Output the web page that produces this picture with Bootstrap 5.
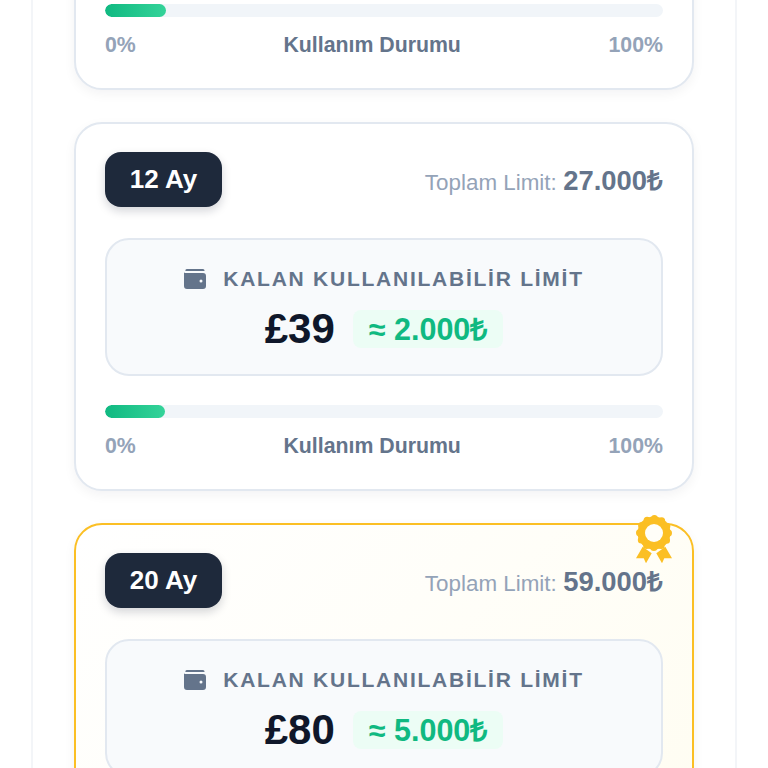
<!DOCTYPE html>
<html lang="en">

<head>
    <meta charset="UTF-8">
    <meta name="viewport" content="width=device-width, initial-scale=1.0">
    <title>Limitler</title>
    <link href="https://cdn.jsdelivr.net/npm/bootstrap@5.3.2/dist/css/bootstrap.min.css" rel="stylesheet">
    <style>
        html, body { height: 768px; overflow: hidden; }
        body { background: #fff; font-family: "Liberation Sans", Arial, sans-serif; }
        .panel-wrap { width: 706px; margin: 0 auto 0 31px; padding: 0 41px; background: #fff; border-left: 2px solid #f3f5f8; border-right: 2px solid #f3f5f8; min-height: 768px; }
        .plan-list { margin-top: -55px; gap: 32px; }
        .plan-card { border: 2px solid #e2e8f0; border-radius: 28px; padding: 28px 29px 29px; box-shadow: 0 4px 12px rgba(15, 23, 42, .05); background: #fff; }
        .plan-card.best { border-color: #fbbf24; background: linear-gradient(135deg, #fff 0%, #fffdf2 100%); }
        .term-pill { width: 117px; height: 55px; border-radius: 16px; background: #1e293b; color: #fff; font-size: 26px; font-weight: 700; box-shadow: 0 4px 10px rgba(15, 23, 42, .18); }
        .limit-block { padding-top: 3px; }
        .limit-label { color: #94a3b8; font-size: 22.4px; }
        .limit-value { color: #64748b; font-size: 27.4px; font-weight: 700; margin-left: 2px; }
        .remain-box { margin-top: 31px; height: 138px; border: 2px solid #e2e8f0; border-radius: 24px; background: #f8fafc; padding-top: 25px; }
        .remain-title { color: #64748b; font-size: 21px; font-weight: 700; letter-spacing: 1.75px; line-height: 28px; gap: 17px; }
        .amount-row { margin-top: 12px; gap: 18px; }
        .amount { color: #0f172a; font-size: 42px; font-weight: 700; line-height: 48px; }
        .try-chip { background: #ecfdf5; color: #10b981; font-size: 30.5px; font-weight: 700; border-radius: 8px; padding: 0 16px; height: 38px; line-height: 38px; }
        .plan-progress { height: 13px; margin-top: 29px; background: #f1f5f9; border-radius: 7px; }
        .plan-progress .progress-bar { background: linear-gradient(90deg, #10b981, #34d399); border-radius: 7px; }
        .scale-row { margin-top: 14px; line-height: 28px; font-size: 21.3px; font-weight: 700; }
        .scale-end { color: #94a3b8; }
        .scale-mid { color: #64748b; }
        .medal { position: absolute; top: -11px; right: 19px; }
    </style>
</head>

<body>
    <div class="panel-wrap">
        <div class="plan-list d-flex flex-column">

            <div class="plan-card">
                <div class="progress plan-progress">
                    <div class="progress-bar" style="width: 11%"></div>
                </div>
                <div class="scale-row d-flex justify-content-between">
                    <span class="scale-end">0%</span>
                    <span class="scale-mid">Kullanım Durumu</span>
                    <span class="scale-end">100%</span>
                </div>
            </div>

            <div class="plan-card">
                <div class="d-flex justify-content-between align-items-center">
                    <div class="term-pill d-flex align-items-center justify-content-center">12 Ay</div>
                    <div class="limit-block"><span class="limit-label">Toplam Limit:</span> <span class="limit-value">27.000₺</span></div>
                </div>
                <div class="remain-box text-center">
                    <div class="remain-title d-flex align-items-center justify-content-center">
                        <svg width="22" height="20" viewBox="0 0 22 20" fill="#64748b"><path d="M3 0h16a1.500 1.500 0 0 1 1.500 1.500V2H1.500A1.500 1.500 0 0 1 3 0z"/><path fill-rule="evenodd" d="M2.500 4H19a3 3 0 0 1 3 3v10a3 3 0 0 1-3 3H3a3 3 0 0 1-3-3V3.500C.6 3.900 1.500 4 2.500 4zM17 10.500a1.500 1.500 0 1 0 0 3 1.500 1.500 0 0 0 0-3z"/></svg>
                        <span>KALAN KULLANILABİLİR LİMİT</span>
                    </div>
                    <div class="amount-row d-flex align-items-center justify-content-center">
                        <span class="amount">£39</span>
                        <span class="try-chip">≈ 2.000₺</span>
                    </div>
                </div>
                <div class="progress plan-progress">
                    <div class="progress-bar" style="width: 10.7%"></div>
                </div>
                <div class="scale-row d-flex justify-content-between">
                    <span class="scale-end">0%</span>
                    <span class="scale-mid">Kullanım Durumu</span>
                    <span class="scale-end">100%</span>
                </div>
            </div>

            <div class="plan-card best position-relative">
                <svg class="medal" width="38" height="50" viewBox="0 0 38 50">
                    <path fill="#fbbf24" d="M7.700 32.700l9 6.600-5.700 10-2.300-5H1z M30.300 32.700l-9 6.600 5.700 10 2.300-5H37z"/>
                    <circle cx="19" cy="19" r="16.500" fill="#fbbf24"/>
                    <circle cx="19" cy="19" r="14.500" fill="none" stroke="#fbbf24" stroke-width="7" stroke-linecap="round" stroke-dasharray="0 7.592"/>
                    <circle cx="19" cy="19" r="9" fill="#fffef8"/>
                </svg>
                <div class="d-flex justify-content-between align-items-center">
                    <div class="term-pill d-flex align-items-center justify-content-center">20 Ay</div>
                    <div class="limit-block"><span class="limit-label">Toplam Limit:</span> <span class="limit-value">59.000₺</span></div>
                </div>
                <div class="remain-box text-center">
                    <div class="remain-title d-flex align-items-center justify-content-center">
                        <svg width="22" height="20" viewBox="0 0 22 20" fill="#64748b"><path d="M3 0h16a1.500 1.500 0 0 1 1.500 1.500V2H1.500A1.500 1.500 0 0 1 3 0z"/><path fill-rule="evenodd" d="M2.500 4H19a3 3 0 0 1 3 3v10a3 3 0 0 1-3 3H3a3 3 0 0 1-3-3V3.500C.6 3.900 1.500 4 2.500 4zM17 10.500a1.500 1.500 0 1 0 0 3 1.500 1.500 0 0 0 0-3z"/></svg>
                        <span>KALAN KULLANILABİLİR LİMİT</span>
                    </div>
                    <div class="amount-row d-flex align-items-center justify-content-center">
                        <span class="amount">£80</span>
                        <span class="try-chip">≈ 5.000₺</span>
                    </div>
                </div>
            </div>

        </div>
    </div>
    <script src="https://cdn.jsdelivr.net/npm/bootstrap@5.3.2/dist/js/bootstrap.bundle.min.js"></script>
</body>

</html>
